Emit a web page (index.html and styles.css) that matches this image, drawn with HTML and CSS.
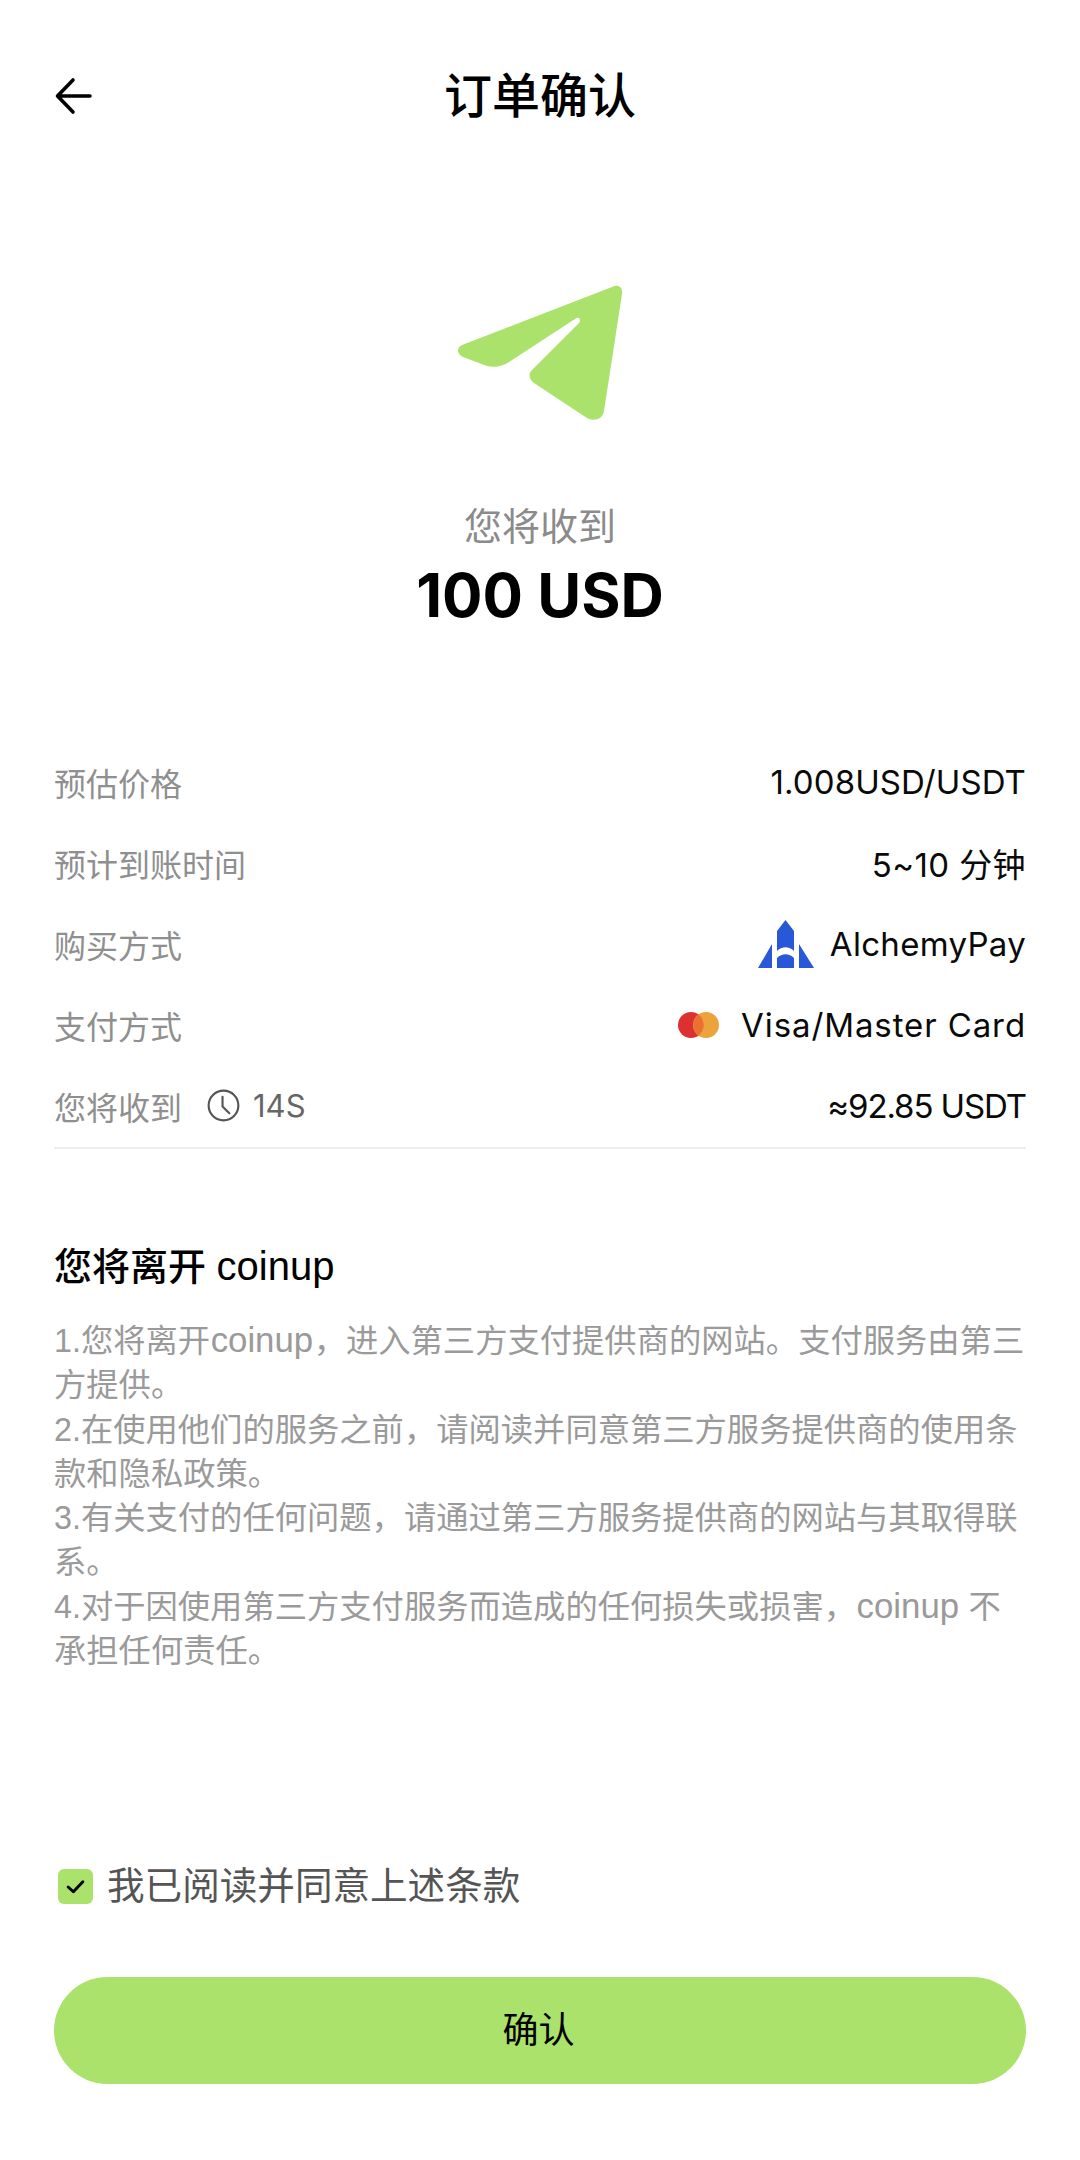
FILE: index.html
```html
<!DOCTYPE html>
<html lang="zh-CN">
<head>
<meta charset="utf-8">
<title>订单确认</title>
<link rel="stylesheet" href="styles.css">
</head>
<body>
<div class="page">
  <header class="topbar">
    <svg class="back" viewBox="0 0 40 40"><path d="M36 20H4M19 4 3.5 20 19 36" fill="none" stroke="#000" stroke-width="3.6" stroke-linecap="round" stroke-linejoin="round"/></svg>
    <h1 class="title">订单确认</h1>
  </header>
  <section class="hero">
    <svg class="plane" viewBox="0 0 166 136"><path d="M5 60 155 2C161-1 166 2 165 9L147 126C146 134 137 137 130 133L77 98C72 94 71 89 75 85L122 38C125 34 121 31 118 34L52 77C46 81 38 83 30 81L6 72C0 69-1 63 5 60Z" fill="#abe26b"/></svg>
    <div class="receive-label">您将收到</div>
    <div class="receive-amount">100 USD</div>
  </section>
  <section class="details">
    <div class="row"><span class="label">预估价格</span><span class="value">1.008USD/USDT</span></div>
    <div class="row"><span class="label">预计到账时间</span><span class="value roomy">5~10 分钟</span></div>
    <div class="row"><span class="label">购买方式</span><span class="value value-icon wide">
      <svg class="alchemy" viewBox="0 0 56 48"><path d="M27.500 0 36 11V31C31 26 24 26 19 31V11ZM14 24V48H0ZM41 24 56 48H41ZM19 48V38C24 33 31 33 36 38V48Z" fill="#2858d8"/></svg>AlchemyPay</span></div>
    <div class="row"><span class="label">支付方式</span><span class="value value-icon spaced">
      <svg class="mc" viewBox="0 0 41 26"><circle cx="13" cy="13" r="13" fill="#dd3030"/><circle cx="28" cy="13" r="13" fill="#eda33b"/><path d="M20.500 2.600a13 13 0 0 1 0 20.800 13 13 0 0 1 0-20.800Z" fill="#ea7033"/></svg>Visa/Master Card</span></div>
    <div class="row"><span class="label label-timer">您将收到
      <svg class="clock" viewBox="0 0 34 34"><circle cx="17" cy="17" r="15.300" fill="none" stroke="#555" stroke-width="2.200"/><path d="M16 8v10l7 7" fill="none" stroke="#555" stroke-width="2.200" stroke-linecap="round" stroke-linejoin="round"/></svg><span class="count">14S</span></span><span class="value tight">≈92.85 USDT</span></div>
  </section>
  <section class="notice">
    <h2 class="notice-title"><b>您将离开</b> <span class="title-latin">coinup</span></h2>
    <p class="notice-body">1.您将离开<span class="latin">coinup</span>，进入第三方支付提供商的网站。支付服务由第三方提供。<br>2.在使用他们的服务之前，请阅读并同意第三方服务提供商的使用条款和隐私政策。<br>3.有关支付的任何问题，请通过第三方服务提供商的网站与其取得联系。<br>4.对于因使用第三方支付服务而造成的任何损失或损害，<span class="latin">coinup</span> 不承担任何责任。</p>
  </section>
  <footer class="footer">
    <label class="agree"><span class="check"><svg viewBox="0 0 20 20"><path d="M3 10.500 8 15 17 5.500" fill="none" stroke="#000" stroke-width="2.800" stroke-linecap="round" stroke-linejoin="round"/></svg></span>我已阅读并同意上述条款</label>
    <div class="confirm">确认</div>
  </footer>
</div>
</body>
</html>
```
FILE: styles.css
```css
* { box-sizing: border-box; }
html, body { margin: 0; padding: 0; background: #fff; }
body { font-family: Inter, "Noto Sans CJK SC", "Noto Sans", sans-serif; color: #000; }
.page { width: 1080px; height: 2160px; padding: 0 54px; display: flex; flex-direction: column; }
.topbar { height: 192px; display: flex; align-items: center; justify-content: center; position: relative; }
.back { position: absolute; left: 0; top: 76px; width: 40px; height: 40px; }
.title { margin: 0; font-size: 48px; font-weight: 500; line-height: 60px; }
.hero { display: flex; flex-direction: column; align-items: center; padding-top: 93px; height: 482px; }
.plane { width: 166px; height: 136px; }
.receive-label { margin-top: 82px; font-size: 38px; line-height: 46px; color: #8b8b8b; }
.receive-amount { margin-top: 8px; font-size: 60px; line-height: 76px; font-weight: 700; }
.details { display: flex; flex-direction: column; border-bottom: 2px solid #eeeeee; margin-top: 67px; padding-bottom: 1px; }
.row { height: 81px; display: flex; align-items: center; justify-content: space-between; }
.label { font-size: 32px; color: #8f8f8f; }
.label-timer { display: flex; align-items: center; }
.clock { width: 33px; height: 33px; margin-left: 25px; }
.count { margin-left: 13px; color: #666; font-size: 31px; }
.value { font-size: 33px; color: #0a0a0a; letter-spacing: 0.1px; }
.value.roomy { letter-spacing: 0.4px; }
.value.tight { letter-spacing: -1.1px; }
.value-icon { display: flex; align-items: center; gap: 22px; }
.value-icon.wide { gap: 16px; letter-spacing: 0.3px; }
.value-icon.spaced { letter-spacing: 0.9px; }
.alchemy { width: 56px; height: 48px; }
.mc { width: 41px; height: 26px; }
.notice { margin-top: 95px; font-family: "Liberation Sans", "Noto Sans CJK SC", sans-serif; }
.notice-title { margin: 0; font-size: 38px; line-height: 46px; font-weight: 400; }
.notice-title b { font-weight: 500; }
.title-latin { font-size: 40px; line-height: 1; }
.notice-body { margin: 29px 0 0; font-size: 32.300px; line-height: 44.300px; color: #9a9a9a; }
.latin { font-size: 34.800px; line-height: 1; margin: 0 0.500px; }
.footer { margin-top: auto; padding-bottom: 76px; }
.agree { display: flex; align-items: center; font-size: 37.600px; line-height: 48px; color: #555; gap: 14px; margin-bottom: 67px; }
.check { width: 35px; height: 35px; border-radius: 6px; background: #abe26b; display: flex; align-items: center; justify-content: center; margin-left: 4px; }
.check svg { width: 21px; height: 21px; }
.confirm { height: 107px; padding: 0 3px 8px 0; border-radius: 54px; background: #abe26b; display: flex; align-items: center; justify-content: center; font-size: 36px; }
```
